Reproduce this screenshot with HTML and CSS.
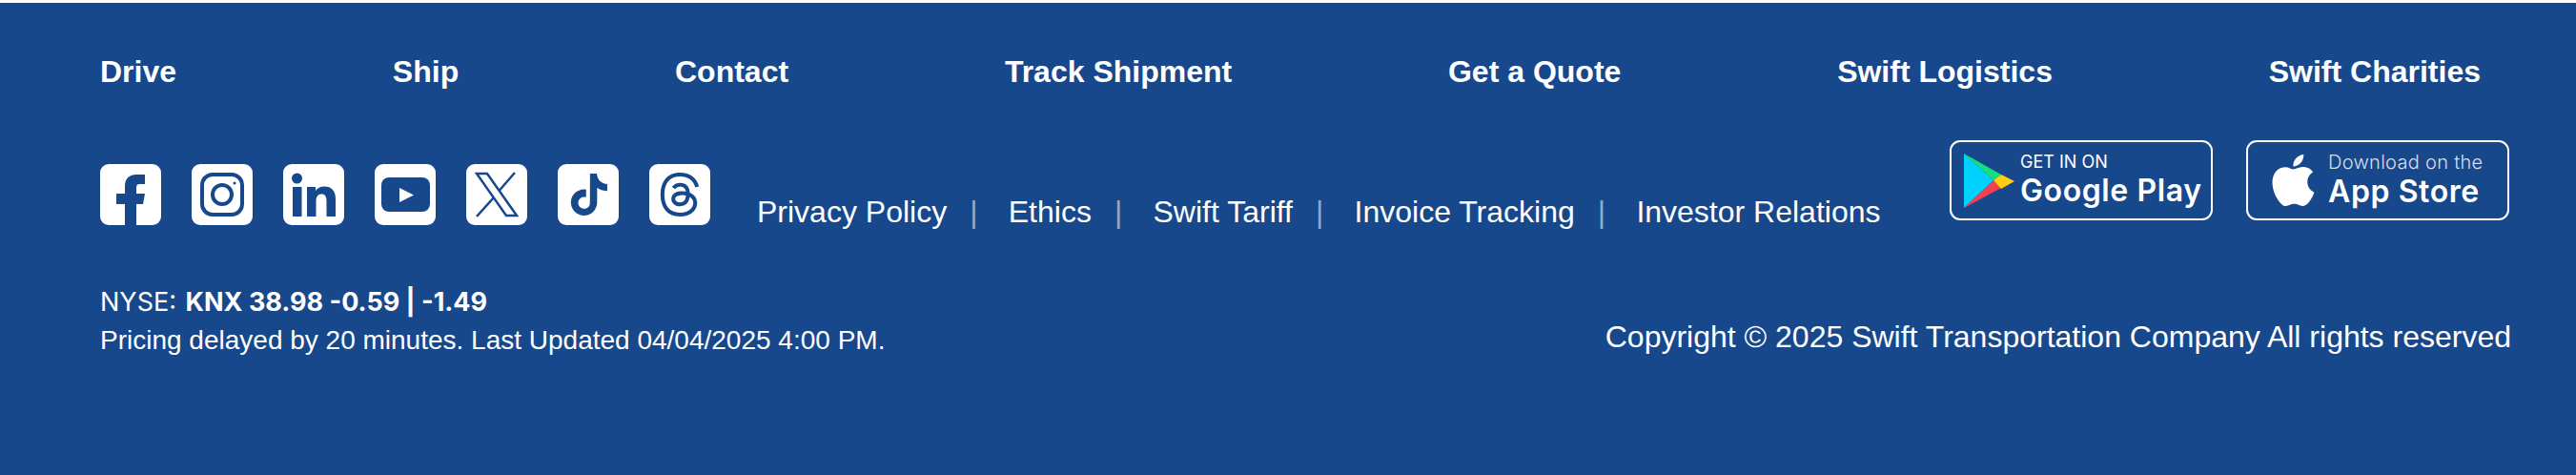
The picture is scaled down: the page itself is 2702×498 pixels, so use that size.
FILE: index.html
```html
<!DOCTYPE html>
<html lang="en">
<head>
    <meta charset="UTF-8">
    <meta name="viewport" content="width=device-width, initial-scale=1.0">
    <title>Swift Footer</title>
    <link rel="stylesheet" href="styles.css">
</head>
<body>
    <footer class="footer">
        <nav class="main-nav">
            <a href="#">Drive</a>
            <a href="#">Ship</a>
            <a href="#">Contact</a>
            <a href="#">Track Shipment</a>
            <a href="#">Get a Quote</a>
            <a href="#">Swift Logistics</a>
            <a href="#">Swift Charities</a>
        </nav>

        <div class="middle-row">
            <div class="social">
                <a href="#" class="social-tile" aria-label="Facebook">
                    <svg viewBox="0 0 64 64"><path class="ink" d="M26 64V42H17V31H26V23C26 15 31 11 38 11H47V21H41C39 21 38 22 38 25V31H47L45 42H38V64Z"/></svg>
                </a>
                <a href="#" class="social-tile" aria-label="Instagram">
                    <svg viewBox="0 0 64 64"><rect class="line" x="11" y="11" width="42" height="42" rx="11" stroke-width="4"/><circle class="line" cx="32" cy="32" r="10" stroke-width="4"/><circle class="ink" cx="45" cy="20" r="1.5"/></svg>
                </a>
                <a href="#" class="social-tile" aria-label="LinkedIn">
                    <svg viewBox="0 0 64 64"><circle class="ink" cx="14.5" cy="15" r="5.5"/><rect class="ink" x="10" y="24" width="9.500" height="31"/><path class="ink" d="M25 24H34V28C36 25 39 23.500 43 23.500C51 23.500 55 28 55 37V55H45.500V39C45.500 34 44 31.500 40.500 31.500C36.500 31.500 34.500 34 34.500 39V55H25Z"/></svg>
                </a>
                <a href="#" class="social-tile" aria-label="YouTube">
                    <svg viewBox="0 0 64 64"><rect class="ink" x="7" y="14" width="51" height="36" rx="8"/><path class="paper" d="M26 25L41 32.500L26 40Z"/></svg>
                </a>
                <a href="#" class="social-tile" aria-label="X">
                    <svg viewBox="0 0 64 64"><path class="line" stroke-width="2.500" d="M11 10H22L53 54H42Z"/><path class="line" stroke-width="2.500" d="M51 9L34.500 28M29 35L11 55"/></svg>
                </a>
                <a href="#" class="social-tile" aria-label="TikTok">
                    <svg viewBox="-6 -5.500 35 35"><path class="ink" d="M12.525.02c1.31-.02 2.61-.01 3.91-.02.08 1.53.63 3.09 1.75 4.17 1.12 1.11 2.7 1.62 4.24 1.79v4.03c-1.44-.05-2.89-.35-4.2-.97-.57-.26-1.1-.59-1.62-.93-.01 2.92.01 5.84-.02 8.75-.08 1.4-.54 2.79-1.35 3.94-1.31 1.92-3.58 3.17-5.91 3.21-1.43.08-2.86-.31-4.08-1.03-2.02-1.19-3.44-3.37-3.65-5.71-.02-.5-.03-1-.01-1.49.18-1.9 1.12-3.72 2.58-4.96 1.66-1.44 3.98-2.13 6.15-1.72.02 1.48-.04 2.96-.04 4.44-.99-.32-2.15-.23-3.02.37-.63.41-1.11 1.04-1.36 1.75-.21.51-.15 1.07-.14 1.61.24 1.64 1.82 3.02 3.5 2.87 1.12-.01 2.19-.66 2.77-1.61.19-.33.4-.67.41-1.06.1-1.79.06-3.57.07-5.36.01-4.03-.01-8.05.02-12.07z"/></svg>
                </a>
                <a href="#" class="social-tile" aria-label="Threads">
                    <svg viewBox="-4.700 -4.700 33.400 33.400"><path class="ink" d="M12.186 24h-.007c-3.581-.024-6.334-1.205-8.184-3.509C2.35 18.44 1.5 15.586 1.472 12.01v-.017c.03-3.579.879-6.43 2.525-8.482C5.845 1.205 8.6.024 12.18 0h.014c2.746.02 5.043.725 6.826 2.098 1.677 1.29 2.858 3.13 3.509 5.467l-2.04.569c-1.104-3.96-3.898-5.984-8.304-6.015-2.91.022-5.11.936-6.54 2.717C4.307 6.504 3.616 8.914 3.589 12c.027 3.086.718 5.496 2.057 7.164 1.43 1.783 3.631 2.698 6.54 2.717 2.623-.02 4.358-.631 5.8-2.045 1.647-1.613 1.618-3.593 1.09-4.798-.31-.71-.873-1.3-1.634-1.75-.192 1.352-.622 2.446-1.284 3.272-.886 1.102-2.14 1.704-3.73 1.79-1.202.065-2.361-.218-3.259-.801-1.063-.689-1.685-1.74-1.752-2.964-.065-1.19.408-2.285 1.33-3.082.88-.76 2.119-1.207 3.583-1.291a13.853 13.853 0 0 1 3.02.142c-.126-.742-.375-1.332-.75-1.757-.513-.586-1.308-.883-2.359-.89h-.029c-.844 0-1.992.232-2.721 1.32L7.734 7.847c.98-1.454 2.568-2.256 4.478-2.256h.044c3.194.02 5.097 1.975 5.287 5.388.108.046.216.094.321.142 1.49.7 2.58 1.761 3.154 3.07.797 1.82.871 4.79-1.548 7.158-1.85 1.81-4.094 2.628-7.277 2.65Zm1.003-11.69c-.242 0-.487.007-.739.021-1.836.103-2.98.946-2.916 2.143.067 1.256 1.452 1.839 2.784 1.767 1.224-.065 2.818-.543 3.086-3.71a10.5 10.5 0 0 0-2.215-.221z"/></svg>
                </a>
            </div>

            <div class="legal-links">
                <a href="#">Privacy Policy</a>
                <span class="sep">|</span>
                <a href="#">Ethics</a>
                <span class="sep">|</span>
                <a href="#">Swift Tariff</a>
                <span class="sep">|</span>
                <a href="#">Invoice Tracking</a>
                <span class="sep">|</span>
                <a href="#">Investor Relations</a>
            </div>

            <div class="badges">
                <a href="#" class="badge badge-google">
                    <svg class="play-icon" viewBox="0 0 53 57">
                        <path fill="#00d2ff" d="M0 0V57L31 28Z"/>
                        <path fill="#14e07f" d="M0 0L39 22L31 28Z"/>
                        <path fill="#f5404f" d="M0 57L39 36L31 28Z"/>
                        <path fill="#ffcf0d" d="M39 22L53 29L39 37L31 28Z"/>
                    </svg>
                    <span class="badge-text">
                        <span class="badge-small">GET IN ON</span>
                        <span class="badge-big">Google Play</span>
                    </span>
                </a>
                <a href="#" class="badge badge-apple">
                    <svg class="apple-icon" viewBox="2 0 20 24"><path fill="#fff" d="M12.152 6.896c-.948 0-2.415-1.078-3.96-1.04-2.04.027-3.91 1.183-4.961 3.014-2.117 3.675-.546 9.103 1.519 12.09 1.013 1.454 2.208 3.09 3.792 3.039 1.52-.065 2.09-.987 3.935-.987 1.831 0 2.35.987 3.96.948 1.637-.026 2.676-1.48 3.676-2.948 1.156-1.688 1.636-3.325 1.662-3.415-.039-.013-3.182-1.221-3.22-4.857-.026-3.04 2.48-4.494 2.597-4.559-1.429-2.09-3.623-2.324-4.39-2.376-2-.156-3.675 1.09-4.61 1.09zM15.53 3.83c.843-1.012 1.4-2.427 1.245-3.83-1.207.052-2.662.805-3.532 1.818-.78.896-1.454 2.338-1.273 3.714 1.338.104 2.715-.688 3.559-1.701"/></svg>
                    <span class="badge-text">
                        <span class="badge-thin">Download on the</span>
                        <span class="badge-big">App Store</span>
                    </span>
                </a>
            </div>
        </div>

        <div class="bottom-row">
            <div class="stock">
                <p class="stock-price">NYSE: <strong>KNX 38.98 -0.59 | -1.49</strong></p>
                <p class="stock-note">Pricing delayed by 20 minutes. Last Updated 04/04/2025 4:00 PM.</p>
            </div>
            <p class="copyright">Copyright © 2025 Swift Transportation Company All rights reserved</p>
        </div>
    </footer>
</body>
</html>
```

FILE: styles.css
```css
* {
    box-sizing: border-box;
}
html, body {
    margin: 0;
    height: 100%;
}
body {
    font-family: "Liberation Sans", Arial, sans-serif;
    background-color: #18488c;
    color: #fff;
}
a {
    color: #fff;
    text-decoration: none;
}
p {
    margin: 0;
}
.footer {
    height: 100%;
    border-top: 3px solid #fff;
    padding: 54px 68px 0 105px;
}
.main-nav {
    display: flex;
    justify-content: space-between;
    padding-right: 32px;
    font-size: 32px;
    line-height: 36px;
    font-weight: bold;
}
.middle-row {
    display: flex;
    align-items: flex-start;
    margin-top: 54px;
}
.social {
    display: flex;
    gap: 32px;
    margin-top: 25px;
}
.social-tile {
    display: block;
    width: 64px;
    height: 64px;
    background-color: #fff;
    border-radius: 9px;
}
.social-tile svg {
    display: block;
    width: 64px;
    height: 64px;
}
.ink {
    fill: #18488c;
}
.paper {
    fill: #fff;
}
.line {
    fill: none;
    stroke: #18488c;
}
.legal-links {
    display: flex;
    margin-top: 57px;
    margin-left: 49px;
    font-size: 32px;
    line-height: 36px;
}
.sep {
    margin: 0 32.300px 0 24px;
    color: rgba(255, 255, 255, 0.55);
}
.badges {
    display: flex;
    gap: 35px;
    margin-left: auto;
    margin-right: 2px;
}
.badge {
    display: flex;
    align-items: center;
    width: 276px;
    height: 84px;
    border: 2px solid #fff;
    border-radius: 11px;
}
.badge-google {
    padding-left: 13px;
    gap: 6px;
}
.badge-apple {
    padding-left: 25px;
    gap: 14px;
}
.play-icon {
    width: 53px;
    height: 57px;
    flex: none;
}
.apple-icon {
    width: 45px;
    height: 54px;
    flex: none;
}
.badge-text {
    display: flex;
    flex-direction: column;
    margin-top: -3px;
    font-family: Inter, "Liberation Sans", sans-serif;
}
.badge-small {
    font-size: 18px;
    line-height: 24px;
}
.badge-thin {
    font-size: 20px;
    line-height: 26px;
    font-weight: 300;
    color: #d5deec;
    letter-spacing: 0.3px;
}
.badge-big {
    font-size: 32px;
    line-height: 36px;
    font-weight: 600;
    letter-spacing: 0.6px;
}
.bottom-row {
    display: flex;
    justify-content: space-between;
    align-items: flex-end;
    margin-top: 61px;
}
.stock-price {
    font-family: Inter, "Liberation Sans", sans-serif;
    font-size: 27px;
    line-height: 32px;
}
.stock-price strong {
    margin-left: 2px;
}
.stock-note {
    margin-top: 8px;
    font-size: 28px;
    line-height: 32px;
}
.copyright {
    padding-bottom: 2px;
    font-size: 32px;
    line-height: 36px;
}
```
